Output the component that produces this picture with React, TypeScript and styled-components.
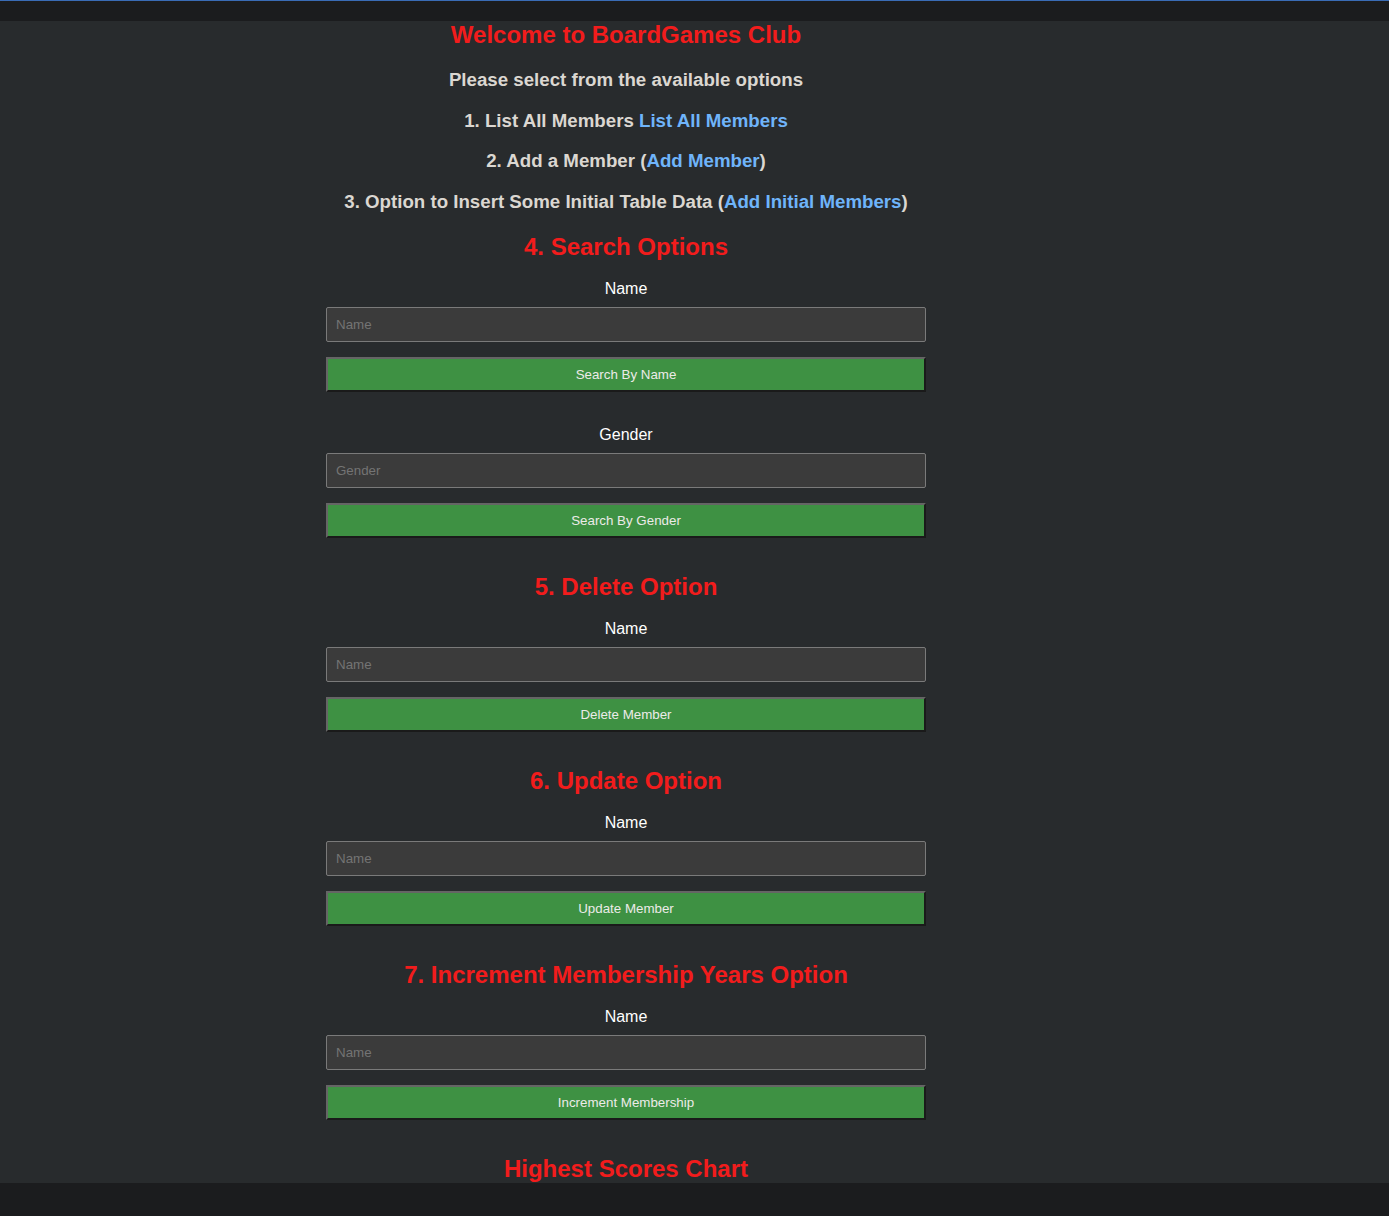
import React from "react";
import styled, { createGlobalStyle } from "styled-components";

const Global = createGlobalStyle`
  html, body { margin: 0; padding: 0; background: #1b1c1e; }
  body { font-family: "Liberation Sans", Arial, sans-serif; }
  * { box-sizing: border-box; }
`;

const TopLine = styled.div`
  height: 1px;
  background: #3a6cb5;
`;

const TopStrip = styled.div`
  height: 20px;
  background: #1b1c1e;
`;

const Frame = styled.div`
  height: 1162px;
  background: #282b2d;
  overflow: hidden;
`;

const BottomStrip = styled.div`
  height: 33px;
  background: #1b1c1e;
`;

const Column = styled.main`
  width: 1252px;
  display: flex;
  flex-direction: column;
  align-items: center;
  text-align: center;
`;

const Title = styled.h1<{ $top?: number }>`
  margin: ${(p) => p.$top ?? 0}px 0 0;
  font-size: 24px;
  line-height: normal;
  font-weight: 700;
  color: #f21c1c;
`;

const Intro = styled.p<{ $first?: boolean }>`
  margin: ${(p) => (p.$first ? 21 : 20)}px 0 0;
  font-size: 18.7px;
  line-height: 20.7px;
  font-weight: 700;
  color: #dbd7d1;
`;

const Link = styled.a`
  color: #6fb4fa;
  text-decoration: none;
  cursor: pointer;
`;

const Label = styled.label<{ $top: number }>`
  display: block;
  margin-top: ${(p) => p.$top}px;
  font-size: 16px;
  line-height: normal;
  color: #ffffff;
`;

const Input = styled.input`
  display: block;
  margin-top: 9px;
  width: 600px;
  height: 35px;
  padding: 0 9px;
  background: #3b3b3b;
  border: 1px solid #7a7a7a;
  border-radius: 2px;
  color: #e8e6e3;
  font-family: "Liberation Sans", Arial, sans-serif;
  font-size: 13.33px;
  outline: none;
  &::placeholder { color: #747474; }
`;

const Button = styled.button`
  display: block;
  margin-top: 15px;
  width: 600px;
  height: 35px;
  background: #3e9143;
  border-style: solid;
  border-width: 2px;
  border-color: #656565 #1a1a1a #1a1a1a #656565;
  color: #ecebe8;
  font-family: "Liberation Sans", Arial, sans-serif;
  font-size: 13.33px;
  cursor: pointer;
`;

type FieldProps = { label: string; button: string; top: number };

const Field = ({ label, button, top }: FieldProps) => (
  <>
    <Label $top={top}>{label}</Label>
    <Input placeholder={label} />
    <Button>{button}</Button>
  </>
);

const sections: { title: string; button: string }[] = [
  { title: "5. Delete Option", button: "Delete Member" },
  { title: "6. Update Option", button: "Update Member" },
  { title: "7. Increment Membership Years Option", button: "Increment Membership" },
];

export default function App() {
  return (
    <>
      <Global />
      <TopLine />
      <TopStrip />
      <Frame>
        <Column>
          <Title>Welcome to BoardGames Club</Title>
          <Intro $first>Please select from the available options</Intro>
          <Intro>
            1. List All Members <Link>List All Members</Link>
          </Intro>
          <Intro>
            2. Add a Member (<Link>Add Member</Link>)
          </Intro>
          <Intro>
            3. Option to Insert Some Initial Table Data (<Link>Add Initial Members</Link>)
          </Intro>
          <Title $top={20}>4. Search Options</Title>
          <Field label="Name" button="Search By Name" top={19} />
          <Field label="Gender" button="Search By Gender" top={34} />
          {sections.map((s) => (
            <React.Fragment key={s.title}>
              <Title $top={35}>{s.title}</Title>
              <Field label="Name" button={s.button} top={19} />
            </React.Fragment>
          ))}
          <Title $top={35}>Highest Scores Chart</Title>
        </Column>
      </Frame>
      <BottomStrip />
    </>
  );
}
